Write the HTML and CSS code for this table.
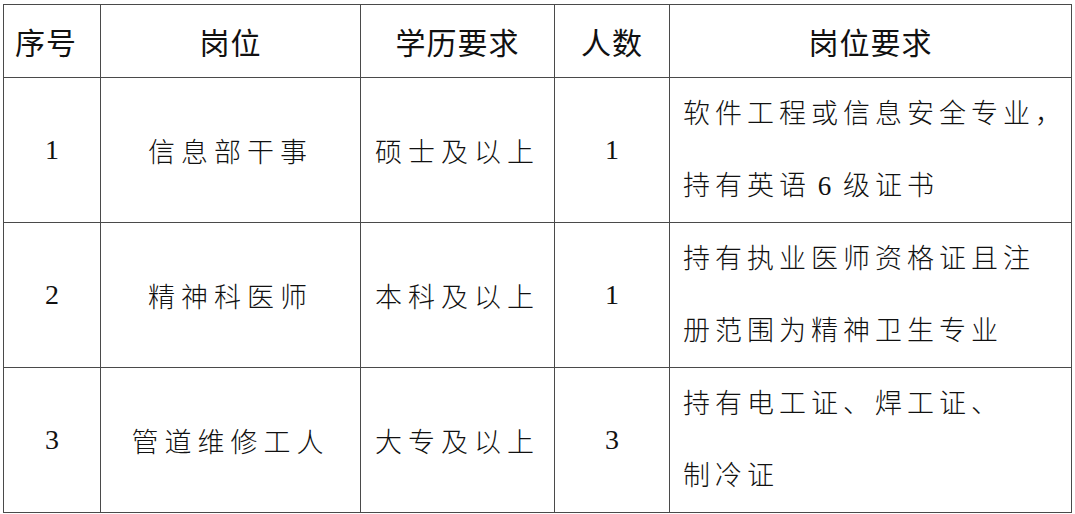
FILE: index.html
```html
<!DOCTYPE html>
<html lang="zh">
<head>
<meta charset="utf-8">
<link rel="stylesheet" href="styles.css">
</head>
<body>
<table class="jobs">
  <colgroup>
    <col class="c1"><col class="c2"><col class="c3"><col class="c4"><col class="c5">
  </colgroup>
  <thead>
    <tr class="head">
      <th>序号</th><th>岗位</th><th>学历要求</th><th>人数</th><th>岗位要求</th>
    </tr>
  </thead>
  <tbody>
    <tr class="row">
      <td class="num">1</td>
      <td class="cn">信息部干事</td>
      <td class="cn">硕士及以上</td>
      <td class="num">1</td>
      <td class="req">软件工程或信息安全专业，<br>持有英语<span class="sp"> </span>6<span class="sp"> </span>级证书</td>
    </tr>
    <tr class="row">
      <td class="num">2</td>
      <td class="cn">精神科医师</td>
      <td class="cn">本科及以上</td>
      <td class="num">1</td>
      <td class="req">持有执业医师资格证且注<br>册范围为精神卫生专业</td>
    </tr>
    <tr class="row">
      <td class="num">3</td>
      <td class="cn">管道维修工人</td>
      <td class="cn">大专及以上</td>
      <td class="num">3</td>
      <td class="req">持有电工证、焊工证、<br>制冷证</td>
    </tr>
  </tbody>
</table>
</body>
</html>
```

FILE: styles.css
```css
html, body {
  margin: 0;
  padding: 0;
  background: #ffffff;
}

.jobs {
  border-collapse: collapse;
  table-layout: fixed;
  margin: 4px 0 0 3px;
  width: 1068px;
  color: #111111;
  font-family: "Liberation Serif", "Noto Sans CJK SC", serif;
}

.c1 { width: 97px; }
.c2 { width: 260px; }
.c3 { width: 194px; }
.c4 { width: 115px; }
.c5 { width: 402px; }

.jobs th,
.jobs td {
  border: 1.5px solid #4a4a4a;
  padding: 0;
  text-align: center;
  vertical-align: middle;
}

.head {
  height: 73px;
}

.head th {
  font-family: "Noto Sans CJK SC", sans-serif;
  font-weight: 400;
  font-size: 30px;
  letter-spacing: 1px;
}

.head th:first-child {
  text-align: left;
  padding-left: 11px;
}

.row {
  height: 144px;
}

.num {
  font-family: "Liberation Serif", serif;
  font-size: 28px;
}

.cn {
  font-family: "Noto Sans CJK SC", sans-serif;
  font-weight: 300;
  font-size: 27px;
  letter-spacing: 6px;
}

.req {
  text-align: left !important;
  padding-left: 13px !important;
  font-family: "Liberation Serif", "Noto Sans CJK SC", sans-serif;
  font-weight: 300;
  font-size: 27px;
  letter-spacing: 5px;
  line-height: 72px;
}

.sp {
  letter-spacing: 0;
}
```
